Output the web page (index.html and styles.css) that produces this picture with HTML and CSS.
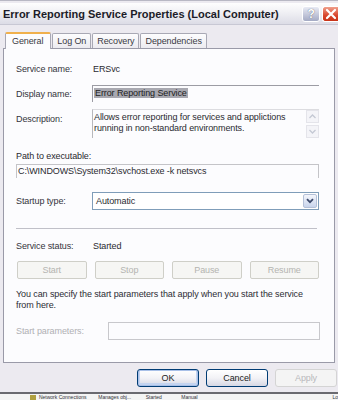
FILE: index.html
```html
<!DOCTYPE html>
<html lang="en">
  <head>
    <meta charset="UTF-8" />
    <title>Error Reporting Service Properties (Local Computer)</title>
    <link rel="stylesheet" href="styles.css">
  </head>
  <body>
    <div class="dialog">
      <div class="titlebar">
        <span class="title">Error Reporting Service Properties (Local Computer)</span>
        <div class="caption-btns">
          <button class="cap-btn help-btn">?</button>
          <button class="cap-btn close-btn">
            <svg width="12" height="12" viewBox="0 0 12 12">
              <path d="M2 2 L10 10 M10 2 L2 10" stroke="#fff" stroke-width="2.2" stroke-linecap="round" />
            </svg>
          </button>
        </div>
      </div>

      <div class="tabs">
        <div class="tab active">General</div>
        <div class="tab">Log On</div>
        <div class="tab">Recovery</div>
        <div class="tab">Dependencies</div>
      </div>

      <div class="panel">
        <div class="row row-name">
          <span class="label">Service name:</span>
          <span class="value">ERSvc</span>
        </div>
        <div class="row row-display">
          <span class="label">Display name:</span>
          <div class="field readonly"><span class="selected">Error Reporting Service</span></div>
        </div>
        <div class="row row-desc">
          <span class="label">Description:</span>
          <div class="field desc">
            <div class="desc-text">Allows error reporting for services and applictions running in non-standard environments.</div>
            <div class="scroll">
              <span class="arrow">
                <svg width="7" height="5" viewBox="0 0 7 5"><path d="M0.5 4 L3.5 1 L6.5 4" fill="none" stroke="#c4c8d4" stroke-width="1.3" /></svg>
              </span>
              <span class="arrow">
                <svg width="7" height="5" viewBox="0 0 7 5"><path d="M0.5 1 L3.5 4 L6.5 1" fill="none" stroke="#c4c8d4" stroke-width="1.3" /></svg>
              </span>
            </div>
          </div>
        </div>
        <div class="path-label">Path to executable:</div>
        <div class="field path">C:\WINDOWS\System32\svchost.exe -k netsvcs</div>
        <div class="row row-startup">
          <span class="label">Startup type:</span>
          <div class="select">
            <span class="select-text">Automatic</span>
            <span class="drop">
              <svg width="8" height="6" viewBox="0 0 8 6"><path d="M1 1.2 L4 4.2 L7 1.2" fill="none" stroke="#3c4a6c" stroke-width="1.8" /></svg>
            </span>
          </div>
        </div>
        <div class="separator"></div>
        <div class="row row-status">
          <span class="label">Service status:</span>
          <span class="value">Started</span>
        </div>
        <div class="svc-btns">
          <button class="svc-btn" disabled>Start</button>
          <button class="svc-btn" disabled>Stop</button>
          <button class="svc-btn" disabled>Pause</button>
          <button class="svc-btn" disabled>Resume</button>
        </div>
        <p class="hint">You can specify the start parameters that apply when you start the service from here.</p>
        <div class="row row-params">
          <span class="label params-label">Start parameters:</span>
          <div class="field params"></div>
        </div>
      </div>

      <div class="footer">
        <button class="dlg-btn default">OK</button>
        <button class="dlg-btn">Cancel</button>
        <button class="dlg-btn" disabled>Apply</button>
      </div>
    </div>

    <div class="behind">
      <div class="behind-row">
        <span class="behind-icon"></span>
        <span class="col c1">Network Connections</span>
        <span class="col c2">Manages obj...</span>
        <span class="col c3">Started</span>
        <span class="col c4">Manual</span>
        <span class="col c5">Lo</span>
      </div>
    </div>
  </body>
</html>
```

FILE: styles.css
```css
* {
  box-sizing: border-box;
}
body {
  margin: 0;
  width: 338px;
  height: 400px;
  overflow: hidden;
  background: #eceaf0;
  font-family: "Liberation Sans", Arial, sans-serif;
  font-size: 9px;
  letter-spacing: -0.1px;
  color: #2a2a30;
}
button {
  font-family: "Liberation Sans", Arial, sans-serif;
  font-size: 9px;
  letter-spacing: -0.1px;
}
.dialog {
  height: 392px;
  padding-top: 3px;
  border-top: 1px solid #b8b8c4;
  background: #eceaf0;
}
.titlebar {
  height: 22px;
  margin-top: -1px;
  display: flex;
  align-items: center;
  justify-content: space-between;
  padding-left: 3px;
  background: linear-gradient(#fefefe, #f0f0f4 45%, #dcdce6);
  border-bottom: 1px solid #c8c8d4;
}
.title {
  font-weight: 700;
  font-size: 11px;
  letter-spacing: 0;
  color: #1c1c28;
  white-space: nowrap;
}
.caption-btns {
  display: flex;
  gap: 2px;
  align-self: flex-start;
  margin-top: 3px;
}
.cap-btn {
  width: 18px;
  height: 16px;
  padding: 0;
  border: 1px solid #fff;
  border-radius: 3px;
  display: flex;
  align-items: center;
  justify-content: center;
}
.help-btn {
  background: linear-gradient(#e8eaf4, #a4aac4);
  color: #fff;
  font-weight: 700;
  font-size: 12px;
  text-shadow: 0 0 1px #445;
}
.close-btn {
  width: 16px;
  border-right: none;
  border-radius: 3px 0 0 3px;
  background: linear-gradient(#f0a08c, #d8452c 60%, #c83418);
}
.tabs {
  display: flex;
  align-items: flex-end;
  height: 17px;
  margin-top: 6px;
  padding-left: 5px;
  gap: 1px;
}
.tab {
  height: 15px;
  padding: 0 4px;
  line-height: 14px;
  border: 1px solid #a8a8b4;
  border-bottom: none;
  border-radius: 2px 2px 0 0;
  background: linear-gradient(#fdfdfe, #ecebf0);
  color: #3a3a44;
  white-space: nowrap;
}
.tab.active {
  height: 17px;
  padding: 0 7px 0 6px;
  line-height: 15px;
  background: #fcfcfe;
  border-top: 2px solid #f0b04c;
  margin-bottom: -1px;
  position: relative;
}
.panel {
  margin-left: 3px;
  width: 332px;
  height: 315px;
  border: 1px solid #9a9aa8;
  background: #fcfcfe;
  padding: 0 15px 0 12px;
}
.row {
  display: flex;
  align-items: center;
}
.label {
  width: 76px;
  flex: none;
  color: #34343c;
}
.value {
  padding-left: 1px;
}
.row-name {
  margin-top: 13px;
  height: 14px;
}
.field {
  flex: 1;
  background: #fff;
  border: 1px solid #c8c8cc;
  border-right: none;
  border-bottom: none;
}
.row-display {
  margin-top: 9px;
  height: 17px;
}
.readonly {
  height: 17px;
  padding: 2px 0 0 1px;
  background: transparent;
  border-color: #9c9ca4;
}
.selected {
  background: #a8a8b0;
  color: #222;
  padding: 0 1px;
}
.row-desc {
  margin-top: 7px;
  height: 29px;
  align-items: flex-start;
}
.row-desc .label {
  margin-top: 5px;
}
.desc {
  height: 29px;
  display: flex;
  background: transparent;
  border-color: #dcdce0;
  border-left-color: #b8b8bc;
}
.desc-text {
  flex: 1;
  line-height: 11px;
  padding: 2px 0 0 1px;
}
.scroll {
  width: 13px;
  display: flex;
  flex-direction: column;
  justify-content: space-between;
}
.arrow {
  height: 13px;
  display: flex;
  align-items: center;
  justify-content: center;
  background: #f4f4f8;
  border: 1px solid #e4e4ea;
}
.path-label {
  margin-top: 12px;
  height: 14px;
  line-height: 13px;
}
.path {
  height: 14px;
  line-height: 12px;
  padding-left: 1px;
  border-right: 1px solid #d0d0d4;
  border-color: #c4c4c8;
  background: transparent;
  white-space: nowrap;
}
.row-startup {
  margin-top: 14px;
  height: 18px;
}
.select {
  flex: 1;
  height: 18px;
  display: flex;
  border: 1px solid #7f9db9;
  background: #fff;
}
.select-text {
  flex: 1;
  padding-left: 3px;
  line-height: 16px;
}
.drop {
  width: 14px;
  margin: 1px;
  display: flex;
  align-items: center;
  justify-content: center;
  border: 1px solid #b4c0d8;
  border-radius: 2px;
  background: linear-gradient(#f4f6fc, #c8d4ec);
}
.separator {
  margin-top: 18px;
  margin-right: 2px;
  height: 1px;
  background: #c0c0c8;
}
.row-status {
  margin-top: 10px;
  height: 14px;
}
.svc-btns {
  display: flex;
  gap: 8px;
  margin-top: 8px;
  padding-left: 1px;
}
.svc-btn {
  flex: 1;
  height: 18px;
  padding: 0;
  border: 1px solid #cfcfc8;
  border-radius: 2px;
  background: #f6f6f4;
  color: #b4b4b0;
}
.hint {
  margin: 10px 0 0;
  line-height: 11px;
  color: #2c2c34;
}
.row-params {
  margin-top: 11px;
  height: 18px;
}
.params-label {
  width: 92px;
  color: #b0b0b4;
}
.params {
  height: 18px;
  margin-right: -1px;
  background: transparent;
  border: 1px solid #c8c8cc;
}
.footer {
  display: flex;
  justify-content: flex-end;
  gap: 7px;
  margin-top: 6px;
  padding-right: 1px;
}
.dlg-btn {
  width: 62px;
  height: 18px;
  padding: 0;
  border: 1px solid #003c74;
  border-radius: 3px;
  background: linear-gradient(#ffffff, #f2f2f6 50%, #d6d8e4);
  color: #222;
}
.dlg-btn.default {
  box-shadow: inset 0 0 0 1px #a8c0e8, inset 0 -1px 0 2px #c4d4f0;
}
.dlg-btn:disabled {
  border-color: #d4d4d4;
  background: #f4f4f4;
  color: #b8b8bc;
}
.behind {
  height: 8px;
  border-top: 2px solid #6a6a70;
  background: #f4f4f4;
  overflow: hidden;
}
.behind-row {
  display: flex;
  align-items: center;
  height: 6px;
  font-size: 5px;
  line-height: 6px;
  letter-spacing: 0;
  color: #303038;
  white-space: nowrap;
}
.behind-icon {
  width: 6px;
  height: 5px;
  margin-left: 30px;
  margin-right: 3px;
  background: #b0a040;
}
.c1 { width: 60px; }
.c2 { width: 48px; }
.c3 { width: 36px; }
.c4 { width: 80px; }
.c5 { margin-left: 72px; }
```
